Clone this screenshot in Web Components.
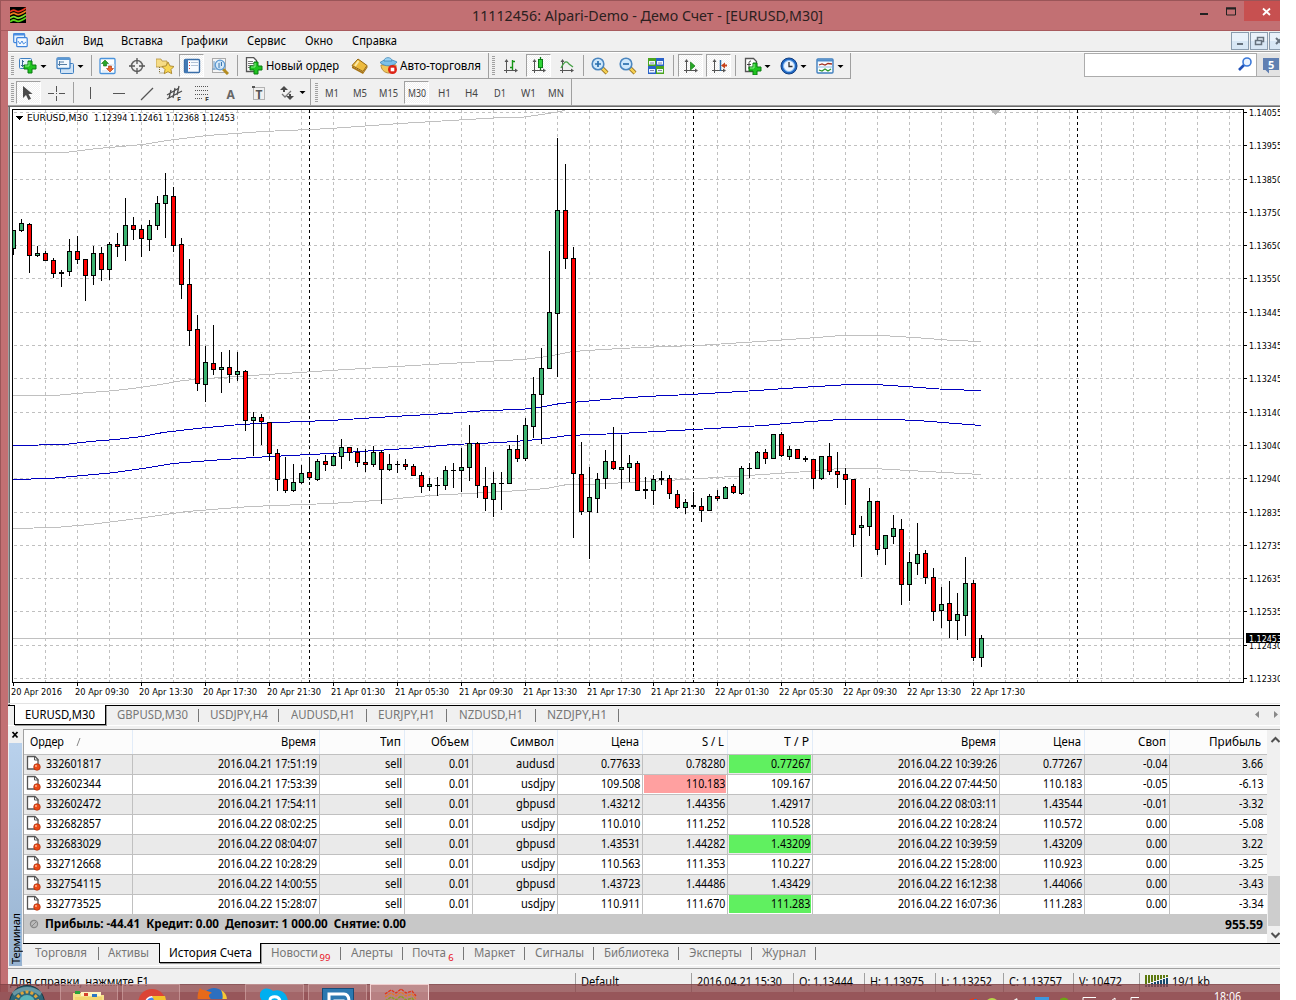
<!DOCTYPE html>
<html lang="ru">
<head>
<meta charset="utf-8">
<title>11112456: Alpari-Demo - Демо Счет - [EURUSD,M30]</title>
<style>
  body { margin: 0; width: 1296px; height: 1000px; overflow: hidden; background: #fff; font: 12px "Noto Sans", "Open Sans", sans-serif; color: #000; }
</style>
</head>
<body>
<mt-window></mt-window>

<script>
/* ---------- Icons, drawn on an 18x18 grid ---------- */
const plus = (x, y) => `<path d="M${x + 4} ${y}h4v4h4v4h-4v4h-4v-4h-4v-4h4z" fill="#1fc41f" stroke="#0a7a12" stroke-width="1"/><path d="M${x + 5} ${y + 1}v4h-4" fill="none" stroke="#8df08d"/>`;
const axes = `<path d="M4.500 3v13M2 13.500h13" stroke="#555" fill="none"/><path d="M2.500 5l2-3 2 3zM13 11.500l3 2-3 2z" fill="#555"/>`;
const lens = (sign) => `<path d="M11 11l5 5" stroke="#8a6414" stroke-width="4"/><path d="M11 11l5 5" stroke="#f3cf52" stroke-width="2.500"/><circle cx="7" cy="7" r="5.800" fill="#cfe8fb" stroke="#4b86bf" stroke-width="1.600"/>${sign}`;
const chartWin = (x, y) => `<rect x="${x + .5}" y="${y + .5}" width="12" height="10" rx="1" fill="#eaf4fd" stroke="#3f7fc0"/>`;

const ICONS = {
  newChart: `${chartWin(0, 1)}<path d="M3.500 3v7M2 8.500h8M3 4.500h2" stroke="#3b6a96" fill="none"/>${plus(5, 4)}`,
  profiles: `<rect x="4.500" y="6.500" width="13" height="10" rx="1" fill="#cfe3f6" stroke="#3f7fc0"/><rect x="1" y="1" width="13" height="10.500" rx="1" fill="#f2f8fe" stroke="#3f7fc0" stroke-width="1.300"/><path d="M1 2h13" stroke="#5b98d4" stroke-width="2"/><path d="M3.500 4v5M2 7.500h9M8 5l-4 0" stroke="#557da3" fill="none"/>`,
  market: `<rect x="1" y="1.500" width="15" height="15" rx="1" fill="#fdfeff" stroke="#4a93dc" stroke-width="1.300"/><path d="M7 8h9M3 14h6" stroke="#cfe0f1"/><path d="M6 3l3.500 3.500h-2V9h-3V6.500h-2z" fill="#29a629" stroke="#137013" stroke-width=".600"/><path d="M11 15l3.500-3.500h-2V9h-3v2.500h-2z" fill="#f2622a" stroke="#a5300a" stroke-width=".600"/>`,
  target: `<circle cx="9" cy="9" r="5.500" fill="none" stroke="#666" stroke-width="1.500"/><path d="M9 1v6M9 11v6M1 9h6M11 9h6" stroke="#555" stroke-width="1.300"/>`,
  folderStar: `<path d="M0 2h5l1 2h5v6H0z" fill="#f6dc86" stroke="#b5923c" stroke-width=".800"/><path d="M3.500 10v6h5" stroke="#7f6f38" stroke-dasharray="1 1" fill="none"/><path d="M12 5l1.900 3.900 4.100.6-3 3 .7 4.200L12 14.700l-3.700 2 .7-4.200-3-3 4.100-.6z" fill="#f8d652" stroke="#a8842c" stroke-width=".900"/>`,
  navigator: `<rect x="1.500" y="2.500" width="15" height="13" rx="1" fill="#f8fbff" stroke="#3a6ea8" stroke-width="1.400"/><path d="M3.500 2v14" stroke="#4279b5" stroke-width="3"/><path d="M6 5.500h1M6 8.500h1M6 11.500h1" stroke="#d84040"/><path d="M8 5.500h7M8 8.500h7" stroke="#9fb4cc" stroke-width=".800"/>`,
  tester: `<rect x="1.500" y="1.500" width="13" height="14" fill="#f5f5f5" stroke="#aaa"/><path d="M3 4v9M1 12h12M9 3v9" stroke="#6c9ac4"/><path d="M12 12l5 5" stroke="#b48c20" stroke-width="3"/><circle cx="9" cy="8" r="4.800" fill="#cde6fa" fill-opacity=".800" stroke="#5d9ad2" stroke-width="1.300"/><path d="M8 6v5M10.500 5v4" stroke="#3c78b0"/>`,
  order: `<path d="M1.500 .500h7l3 3v11h-10z" fill="#fff" stroke="#555" stroke-width="1.300"/><path d="M3 4.500h5M3 6.500h7M3 8.500h5M3 10.500h4" stroke="#777"/>${plus(5, 5)}`,
  book: `<path d="M7 2l9 6.500-4 6L1 8.500z" fill="#edbb3e" stroke="#94660e"/><path d="M1 9l11 6 4.500-6.500v2L12 17 1 11z" fill="#a87516"/><path d="M7.500 4L4 9" stroke="#fce9a6" stroke-width="2"/>`,
  auto: `<path d="M1 8c0 4 3 8 8 8s7-3 7-8z" fill="#efc75c" stroke="#b98e3a"/><path d="M0 5.500c3-2 5-3 8-3s6 1 9 2.500c-3 4.500-12 5.500-17 .5z" fill="#7cc0ea" stroke="#3d87b8" stroke-width=".800"/><path d="M4 4c0-4.500 8-4.500 8 0z" fill="#9bd3f4" stroke="#3d87b8" stroke-width=".800"/><circle cx="12.500" cy="12.500" r="4.500" fill="#dd2317"/><rect x="10.700" y="10.700" width="3.600" height="3.600" fill="#fff"/>`,
  bars: `${axes}<path d="M10.500 3v10M8 10.500h2M11 4.500h2" stroke="#159415" stroke-width="1.400"/>`,
  candles: `${axes}<path d="M10.500 0v13" stroke="#0c7d16" stroke-width="1.300"/><rect x="8.500" y="2.500" width="4" height="8" fill="#2ed336" stroke="#0c7d16"/>`,
  line: `${axes}<path d="M3 11c4-8 6-7 8-4l4 3" stroke="#46a046" fill="none" stroke-width="1.300"/>`,
  zoomIn: lens('<path d="M4 7h6M7 4v6" stroke="#2b6fae" stroke-width="1.700"/>'),
  zoomOut: lens('<path d="M4 7h6" stroke="#2b6fae" stroke-width="1.700"/>'),
  tiles: `<rect x="1" y="1" width="8" height="8" fill="#4aa51e"/><rect x="9" y="1" width="8" height="8" fill="#2a62c8"/><rect x="1" y="9" width="8" height="8" fill="#2a62c8"/><rect x="9" y="9" width="8" height="8" fill="#4aa51e"/><path d="M2 4h6v3.500H2zM10 4h6v3.500h-6zM2 12h6v3.500H2zM10 12h6v3.500h-6z" fill="#eef6ff"/><path d="M3 6h4M11 6h4M3 13.500h4M11 13.500h4" stroke="#88a"/>`,
  scroll: `${axes}<path d="M8.500 5l4.500 4-4.500 4z" fill="#25a925" stroke="#117a11" stroke-width=".700"/>`,
  shift: `${axes}<path d="M10.500 3v11" stroke="#2a6ca8" stroke-width="1.500"/><path d="M11 8.500l4-3v2h2v2h-2v2z" fill="#c6421a"/>`,
  indicator: `<path d="M1.500 1.500h8l3 3v10h-11z" fill="#fff" stroke="#555" stroke-width="1.300"/><path d="M7 4c-2 0-2 1-2 3v5M3 7.500h4" stroke="#444" fill="none"/>${plus(5, 6)}`,
  clock: `<circle cx="9" cy="9" r="8" fill="#1f67c3" stroke="#123f80"/><circle cx="9" cy="9" r="5.500" fill="#eef6ff" stroke="#8cc0f4"/><path d="M9 5v4.500h3.500" stroke="#333" fill="none" stroke-width="1.300"/>`,
  template: `<rect x="1" y="2" width="16" height="14" rx="1" fill="#f8fcff" stroke="#3f7ebd" stroke-width="1.400"/><path d="M1 3.500h16" stroke="#4e8ccb" stroke-width="2"/><path d="M3 8l3-1 3 1 3-1.500 4 .5" stroke="#a33020" fill="none" stroke-width="1.300"/><path d="M1 10h16" stroke="#7daede" stroke-width=".800"/><path d="M3 13l3 1 3-2 3 2 3-2" stroke="#2c952c" fill="none" stroke-width="1.300"/>`,
  cursor: `<path d="M3 3v12l3-3 2.500 5 2.500-1.200-2.500-4.800h4z" fill="#4a4a4a"/>`,
  cross: `<path d="M8.500 3v6M8.500 13v5M0 10.500h6M11 10.500h6M8 10.500h1" stroke="#555" fill="none"/>`,
  vline: `<path d="M8.500 4v12" stroke="#555"/>`,
  hline: `<path d="M3 10.500h12" stroke="#555"/>`,
  slash: `<path d="M3 17L15 5" stroke="#555" stroke-width="1.300"/>`,
  channel: `<path d="M1 12L13 5M1 16L16 8M5 7L3 15M9 5L7 15M13 3L11 12" stroke="#4e4e4e" stroke-width="1.300"/><text x="11" y="18.500" font-size="7" font-weight="bold" fill="#444">E</text>`,
  fibo: `<path d="M1 3.500h14M1 7.500h14M1 11.500h14M1 15.500h8" stroke="#555" stroke-dasharray="1 1"/><text x="11" y="18.500" font-size="7" font-weight="bold" fill="#444">F</text>`,
  letter: `<text x="4.500" y="15.500" font-size="12" font-weight="bold" fill="#666">A</text>`,
  label: `<rect x="3.500" y="4.500" width="11" height="12" fill="none" stroke="#777" stroke-dasharray="1 1"/><text x="5.500" y="15.500" font-size="12" font-weight="bold" fill="#555">T</text><path d="M2 3h3v2H2z" fill="#555"/>`,
  shapes: `<path d="M6 3l4 4h-3v2h-2V7H2z" fill="#4a4a4a"/><path d="M8 13h3v-2h2v2h3l-4 4z" fill="#4a4a4a"/><path d="M4 11l3 3 6-6" stroke="#777" fill="none" stroke-width="1.300"/>`,
  arrow: `<path d="M5.500 8h6l-3 3z" fill="#000"/>`
};
const icon = (name) => `<svg width="18" height="18" viewBox="0 0 18 18" font-family="Noto Sans, sans-serif">${ICONS[name]}</svg>`;

/* ---------- Text squeezed to a width: w in px, or k as a factor ---------- */
class FitText extends HTMLElement {
  constructor() {
    super();
    this.attachShadow({ mode: 'open' }).innerHTML = `
      <style>
        :host { display: inline-flex; flex: none; }
        span { display: inline-block; flex: none; white-space: pre; transform-origin: 0 50%; }
      </style>
      <span><slot></slot></span>`;
  }
  connectedCallback() {
    const span = this.shadowRoot.querySelector('span');
    const natural = span.getBoundingClientRect().width;
    const w = this.hasAttribute('k') ? natural * Number(this.getAttribute('k')) : Number(this.getAttribute('w'));
    if (!natural || !w) return;
    this.style.width = w + 'px';
    span.style.transform = `scaleX(${w / natural})`;
  }
}

/* ---------- Title bar ---------- */
class MtTitle extends HTMLElement {
  constructor() {
    super();
    this.attachShadow({ mode: 'open' }).innerHTML = `
      <style>
        :host { display: flex; box-sizing: border-box; height: 31px; background: #c27073; border-top: 1px solid #9a5558; border-bottom: 1px solid #a85b5e; border-left: 1px solid #9a5558; }
        .logo { margin: 6px 0 0 9px; }
        .name { margin: 4px 0 0 446px; font-size: 15px; line-height: 21px; color: #2b2020; }
        .close { width: 36px; height: 20px; background: #c75050; }
        .ctl { margin-left: auto; }
      </style>
      <svg class="logo" width="16" height="16"><rect width="16" height="16" fill="#000"/>
        <g fill="none" stroke-width="1.700"><path d="M0 5q3-3 6-1t10-3" stroke="#e8321a"/><path d="M0 8q3-3 6-1t10-3" stroke="#ee7a1c"/><path d="M0 11.500q3-3 6-1t10-3" stroke="#7ee02c"/><path d="M0 14.800q3-3 6-1t10-3" stroke="#5cd41a"/></g></svg>
      <span class="name"><fit-text w="351">11112456: Alpari-Demo - Демо Счет - [EURUSD,M30]</fit-text></span>
      <svg class="ctl" width="44" height="20"><path d="M0 13h8" stroke="#222" stroke-width="2"/><path d="M26.500 8v6h9V8M26 7h10" fill="none" stroke="#222"/><path d="M26 7.500h10" stroke="#222" stroke-width="2"/></svg>
      <div class="close"><svg width="36" height="20"><path d="M19 7.500l7 6.500M26 7.500L19 14" stroke="#fff" stroke-width="1.800"/></svg></div>`;
  }
}

/* ---------- Menu ---------- */
class MtMenu extends HTMLElement {
  constructor() {
    super();
    // [text, text width, space before it]
    const items = [['Файл', 28, 8], ['Вид', 20, 19], ['Вставка', 42, 18], ['Графики', 47, 18], ['Сервис', 39, 19], ['Окно', 28, 19], ['Справка', 45, 19]];
    const glyphs = ['<path d="M5 11h6" stroke="#66727e" stroke-width="2"/>',
      '<path d="M6.500 7V4.500h6v4H10M4.500 7.500h6v4h-6z" fill="none" stroke="#66727e" stroke-width="1.500"/>',
      '<path d="M6 5l6 6M12 5l-6 6" stroke="#66727e" stroke-width="2"/>'];
    this.attachShadow({ mode: 'open' }).innerHTML = `
      <style>
        :host { display: flex; box-sizing: border-box; height: 22px; background: #f0f0f0; border-bottom: 1px solid #fff; box-shadow: inset 0 -1px #a0a0a0; padding-left: 5px; overflow: hidden; }
        .ico { margin: 2px 0 0; }
        .item { line-height: 20px; }
        .mdi { display: flex; gap: 1px; margin: 1px -7px 0 auto; }
        .mdi div { box-sizing: border-box; width: 18px; height: 18px; background: linear-gradient(#e9f2fb 50%, #d8e7f5 50%); border: 1px solid #8a9cae; }
        .mdi svg { display: block; }
      </style>
      <svg class="ico" width="15" height="15"><rect x=".700" y=".700" width="11" height="9" rx="1" fill="#e5f1fd" stroke="#3f84dc" stroke-width="1.200"/><path d="M0 1.500h12" stroke="#4c8ee0" stroke-width="2"/><rect x="3.700" y="4.700" width="10.500" height="9" rx="1" fill="#f4f9ff" stroke="#3f84dc" stroke-width="1.200"/><path d="M5 8l2 3 2-3 1.500 3L13 9" fill="none" stroke="#4c8ee0"/></svg>
      ${items.map(([t, w, gap]) => `<span class="item" style="margin-left:${gap}px"><fit-text w="${w}">${t}</fit-text></span>`).join('')}
      <div class="mdi">${glyphs.map(g => `<div><svg width="16" height="16">${g}</svg></div>`).join('')}</div>`;
  }
}

/* ---------- One cell of a toolbar ---------- */
class ToolCell extends HTMLElement {
  connectedCallback() {
    const name = this.getAttribute('icon');
    this.attachShadow({ mode: 'open' }).innerHTML = `
      <style>
        :host { display: flex; flex: none; box-sizing: border-box; align-items: center; justify-content: center; width: ${this.getAttribute('w')}px; height: 100%; }
        svg { flex: none; display: block; }
        :host([pressed]) { height: 23px; background: repeating-conic-gradient(#fff 0 25%, #f1f1f1 0 50%) 0 0 / 2px 2px; border: 1px solid #fff; border-left-color: #a0a0a0; border-top-color: #a0a0a0; }
        :host([sep]) { height: 21px; background: #a0a0a0; }
        :host([grip]) i { width: 3px; height: 19px; background: repeating-linear-gradient(#a0a0a0 0 1px, transparent 1px 2px); }
      </style>${this.hasAttribute('grip') ? '<i></i>' : ''}${name ? icon(name) : ''}<slot></slot>`;
  }
}

const cells = (list) => list.map(([kind, w, pressed, tw]) => {
  if (kind === '-') return `<tool-cell w="${w}"></tool-cell>`;
  if (kind === '|') return `<tool-cell sep w="1"></tool-cell>`;
  if (kind === '#') return `<tool-cell grip w="${w}"></tool-cell>`;
  if (ICONS[kind]) return `<tool-cell icon="${kind}" w="${w}" ${pressed ? 'pressed' : ''}></tool-cell>`;
  return `<tool-cell w="${w}" ${pressed ? 'pressed' : ''}><fit-text w="${tw}">${kind}</fit-text></tool-cell>`;
}).join('');

class MtToolbars extends HTMLElement {
  constructor() {
    super();
    const standard = [['#', 8], ['newChart', 24], ['arrow', 8], ['-', 4], ['profiles', 25], ['arrow', 7], ['-', 7], ['|'], ['-', 6],
      ['market', 20], ['target', 37], ['folderStar', 19], ['-', 5], ['navigator', 25, 1], ['-', 3], ['tester', 25], ['-', 5], ['|'], ['-', 5],
      ['order', 22], ['-', 1], ['Новый ордер', 73, 0, 73], ['book', 42], ['auto', 16], ['-', 2], ['Авто-торговля', 82, 0, 81], ['-', 7]];
    const charts = [['#', 9], ['bars', 26], ['-', 2], ['candles', 25, 1], ['line', 32], ['|'], ['zoomIn', 31], ['zoomOut', 26], ['tiles', 30], ['-', 2], ['|'], ['-', 4],
      ['scroll', 25, 1], ['-', 3], ['shift', 25, 1], ['-', 4], ['|'], ['-', 5], ['indicator', 24], ['arrow', 6], ['-', 5], ['clock', 25], ['arrow', 6], ['-', 6], ['template', 24], ['arrow', 7], ['-', 6]];
    const drawing = [['#', 8], ['cursor', 25, 1], ['-', 3], ['cross', 25], ['-', 4], ['|'], ['vline', 33], ['hline', 24], ['slash', 32], ['channel', 24], ['fibo', 32], ['letter', 24], ['label', 32], ['shapes', 24], ['arrow', 8], ['-', 3]];
    const periods = [['#', 10], ['M1', 22, 0, 14], ['M5', 34, 0, 14], ['M15', 22, 0, 19], ['-', 5], ['M30', 25, 1, 18], ['-', 2],
      ['H1', 26, 0, 13], ['H4', 29, 0, 13], ['D1', 28, 0, 12], ['W1', 29, 0, 15], ['MN', 25, 0, 16], ['-', 3]];
    this.attachShadow({ mode: 'open' }).innerHTML = `
      <style>
        :host { display: block; background: #f0f0f0; height: 54px; }
        .row { display: flex; height: 26px; width: 1272px; }
        .bar { display: flex; align-items: center; box-sizing: border-box; height: 26px; border-right: 1px solid #a0a0a0; border-bottom: 1px solid #a0a0a0; flex: none; }
        .two { font-size: 10px; color: #444; }
        .two .bar { border-bottom: 0; }
        .two fit-text { margin-top: 2px; }
        .edge { height: 1px; background: #a0a0a0; border-bottom: 1px solid #696969; }
        .search { display: flex; box-sizing: border-box; width: 173px; height: 24px; margin-left: auto; background: #fff; border: 1px solid #acacac; justify-content: flex-end; }
        .chat { width: 23px; height: 24px; background: #e3e3e3; box-shadow: inset 0 -1px #acacac; overflow: hidden; }
      </style>
      <div class="row">
        <div class="bar">${cells(standard)}</div>
        <div class="bar">${cells(charts)}</div>
        <div class="search"><svg width="20" height="22"><path d="M3 16l6-6" stroke="#1f50b8" stroke-width="2.600"/><circle cx="11" cy="8" r="4" fill="#eaf3ff" stroke="#3a78d8" stroke-width="1.600"/></svg></div>
        <div class="chat"><svg width="24" height="24"><path d="M6 5h16v12h-10l0 3.500-3.500-3.500h-2.500z" fill="#5f7fb2"/><text x="11" y="15.500" font-size="11" font-weight="bold" fill="#fff" font-family="Noto Sans, sans-serif">5</text></svg></div>
      </div>
      <div class="row two">
        <div class="bar">${cells(drawing)}</div>
        <div class="bar">${cells(periods)}</div>
      </div>
      <div class="edge"></div>`;
  }
}

/* ---------- Chart ---------- */
// one candle per 8 px: colour (g, r or k for a doji), high, open/close top, bottom, low
const CANDLES = `g230,230,249,255 g219,223,231,232 r223,224,256,273 g246,253,256,257 r251,253,261,261 r258,260,274,278 k270,272,274,287 g239,251,272,276
r236,251,260,264 r259,259,276,301 g246,253,276,285 r247,253,270,281 g242,244,270,280 r233,244,247,257 g198,225,246,261 r217,225,230,240 r225,229,239,257
g220,225,240,251 g196,203,226,230 g173,195,204,238 r187,196,246,252 r238,244,285,299 r259,284,331,346 r315,329,384,391 g346,362,385,402 r325,363,370,375
g352,367,370,393 r350,367,375,383 g352,371,375,381 r370,371,421,431 g412,417,421,456 r414,417,422,445 r422,422,454,461 r449,453,480,491 r457,479,491,493
g464,482,491,492 g465,473,483,484 r457,472,478,480 g459,461,480,481 r455,461,465,471 g454,456,466,466 g439,447,457,469 r447,447,453,461 r448,452,463,467
r449,462,465,472 g446,452,465,467 r450,452,470,504 g454,464,470,471 k461,464,465,473 r459,464,467,470 r464,466,476,476 r472,475,487,493 g478,484,487,491
k477,485,486,496 g466,470,486,490 k463,470,471,488 g448,467,471,492 g425,443,468,481 r442,443,486,498 r467,486,499,511 g472,483,500,517 k472,483,484,510
g445,449,484,484 r435,449,459,462 g418,425,459,461 g377,394,427,438 g348,368,395,444 g251,312,369,369 g138,210,314,377 r164,210,259,269 r247,258,474,538
r442,474,512,515 g467,497,512,559 g473,479,499,513 g450,461,479,489 r427,461,469,470 g435,467,470,489 g455,463,468,482 r461,463,491,491 k477,489,491,499
g475,479,491,505 k471,478,480,485 r475,478,494,499 r490,494,508,509 g499,502,508,514 k492,505,507,509 r498,506,511,522 g494,496,511,511 r490,496,499,501
g486,487,499,499 r484,486,493,494 g466,468,494,495 k463,468,469,478 g451,452,469,469 r449,452,459,464 g434,434,459,459 r432,434,456,457 g446,449,457,460
r449,449,459,459 k456,458,460,462 r459,459,479,489 g456,456,479,480 r443,456,472,475 r452,471,475,488 r468,474,480,505 r479,479,535,547 g516,525,528,577
g488,501,527,536 r501,501,550,555 g535,535,549,565 g515,528,537,544 r519,529,585,605 g552,562,585,601 g523,554,564,575 r550,553,578,584 r568,577,612,621
g587,604,611,628 r581,603,621,638 g593,614,621,640 g557,583,616,636 r580,583,658,661 g635,638,658,667`.split(/\s+/);

const CURVES = [
  ['#c0c0c0', '13,152 65,152 97,148 121,146 143,144 167,140 207,135 263,131 310,129 330,128 400,123 450,120 503,117 520,117 542,114 560,111 567,109'],
  ['#c0c0c0', '13,395 55,395 77,393 115,390 133,388 160,384 183,380 220,377 267,374 300,372 330,370 430,364 503,360 523,359 547,356 573,351 603,349 640,347 697,345 760,341 817,337 841,335 882,335 914,337 954,340 981,341'],
  ['#0000c0', '13,445 65,444 90,441 115,439 143,436 163,432 197,428 240,424 280,422 300,421 330,420 393,416 447,413 487,410 520,409 540,407 560,403 583,401 617,398 645,396 690,394 757,390 800,387 833,385 849,384 875,384 906,386 946,389 981,390'],
  ['#0000c0', '13,479 50,478 83,475 115,472 143,468 173,463 210,460 253,457 290,455 330,453 407,448 453,444 500,442 527,440 547,438 567,435 620,433 657,431 713,428 763,425 797,422 840,419 893,419 917,420 943,422 981,425'],
  ['#c0c0c0', '13,528 55,527 90,524 130,519 187,511 250,506 330,503 377,500 430,495 487,492 520,490 547,488 567,484 587,484 650,481 700,478 763,474 807,471 840,468 873,468 927,471 981,474']
];
const PRICES = [['1.14055', 112], ['1.13955', 145], ['1.13850', 179], ['1.13750', 212], ['1.13650', 245], ['1.13550', 278], ['1.13445', 312], ['1.13345', 345], ['1.13245', 378],
  ['1.13140', 412], ['1.13040', 445], ['1.12940', 478], ['1.12835', 512], ['1.12735', 545], ['1.12635', 578], ['1.12535', 611], ['1.12430', 645], ['1.12330', 678]];
const TIMES = ['20 Apr 2016', '20 Apr 09:30', '20 Apr 13:30', '20 Apr 17:30', '20 Apr 21:30', '21 Apr 01:30', '21 Apr 05:30', '21 Apr 09:30', '21 Apr 13:30', '21 Apr 17:30',
  '21 Apr 21:30', '22 Apr 01:30', '22 Apr 05:30', '22 Apr 09:30', '22 Apr 13:30', '22 Apr 17:30'];

class MtChart extends HTMLElement {
  constructor() {
    super();
    this.attachShadow({ mode: 'open' });
  }
  connectedCallback() {
    const text = (x, y, len, str, fill = '#000') => `<text x="${x}" y="${y}" textLength="${len}" lengthAdjust="spacingAndGlyphs" fill="${fill}">${str}</text>`;
    let grid = '', bodies = '', labels = '';
    for (let x = 45; x < 1243; x += 32) grid += `M${x}.5 110V682`;
    PRICES.forEach(([p, y]) => {
      grid += `M14 ${y}.5H1243`;
      labels += `<path d="M1244 ${y}.5h3" stroke="#000"/>` + text(1249, y + 4, 33, p);
    });
    TIMES.forEach((t, i) => {
      labels += `<path d="M${13.5 + 64 * i} 683v3" stroke="#000"/>` + text(11 + 64 * i, 695, i ? 54 : 51, t);
    });
    CANDLES.forEach((c, i) => {
      const [hi, top, bot, lo] = c.slice(1).split(',').map(Number);
      const x = 13 + 8 * i;
      const fill = { g: '#3cb371', r: '#f00', k: '#000' }[c[0]];
      bodies += `<path d="M${x} ${hi}h1V${lo}h-1zM${x - 2} ${top}h5V${bot}h-5z"/>`;
      if (c[0] !== 'k') bodies += `<path d="M${x - 1} ${top + 1}h3V${bot - 1}h-3z" fill="${fill}"/>`;
    });
    this.shadowRoot.innerHTML = `
      <style>
        :host { display: block; height: 598px; background: #fff; overflow: hidden; }
        svg { display: block; }
        text { font: 9.5px "DejaVu Sans Condensed", "DejaVu Sans", sans-serif; }
      </style>
      <svg width="1272" height="598" viewBox="8 107 1272 598" shape-rendering="crispEdges">
        <path d="M8.500 107v598" stroke="#a0a0a0"/><path d="M9.500 107v598" stroke="#696969"/>
        <path d="${grid}" stroke="#c0c0c0" stroke-dasharray="3 3" fill="none"/>
        <path d="M309.500 110V682M693.500 110V682M1077.500 110V682" stroke="#000" stroke-dasharray="3 3"/>
        <path d="M990 110h10l-5 5z" fill="#b8b8b8"/>
        <path d="M13 638.500H1243" stroke="#c0c0c0"/>
        <clipPath id="area"><path d="M13 110H1243V682H13z"/></clipPath>
        <g clip-path="url(#area)">
          ${CURVES.map(([c, pts]) => `<polyline transform="translate(0 .5)" points="${pts}" fill="none" stroke="${c}"/>`).join('')}
          ${bodies}
        </g>
        <path d="M12.500 109.500H1243.500V682.500H12.500z" fill="none" stroke="#000"/>
        <path d="M15 116h8l-4 4z"/>
        ${labels}
        <path d="M1246 633h34v10h-34z"/>
        ${text(1249, 642, 33, '1.12453', '#fff')}
        ${text(27, 121, 61, 'EURUSD,M30')}${text(94, 121, 141, '1.12394 1.12461 1.12368 1.12453')}
        <path d="M8 703.500h1272" stroke="#e3e3e3"/>
      </svg>`;
  }
}

/* ---------- Row of tabs, used below the chart and below the terminal ---------- */
class MtTabs extends HTMLElement {
  connectedCallback() {
    const tabs = JSON.parse(this.getAttribute('tabs'));
    this.attachShadow({ mode: 'open' }).innerHTML = `
      <style>
        :host { display: flex; box-sizing: border-box; background: #f0f0f0; border-top: 1px solid #000; color: #777; }
        .tab { display: flex; flex: none; box-sizing: border-box; height: 18px; justify-content: center; align-items: center; position: relative; line-height: 18px; padding-right: 1px; }
        .tab::after { content: ""; position: absolute; right: 0; top: 3px; width: 1px; height: 13px; background: #777; }
        .tab.flat::after { display: none; }
        .tab.on { margin-top: -1px; height: 20px; background: #fff; color: #000; border: 1px solid #000; border-top: 0; box-shadow: 1px 1px #999; padding: 0; }
        .tab.on::after { display: none; }
        sub { font-size: 9.5px; color: #e81123; line-height: 1; margin: 9px 0 0 2px; vertical-align: 0; }
        .arrows { margin: 3px 0 0 auto; }
      </style>
      ${tabs.map(([t, w, tw, flag, n]) => `<div class="tab ${flag}" style="width:${w}px"><fit-text w="${tw}">${t}</fit-text>${n ? `<sub>${n}</sub>` : ''}</div>`).join('')}
      ${this.hasAttribute('arrows') ? '<svg class="arrows" width="26" height="12"><path d="M5 2v7L1 5.500zM20 2v7l4-3.500z" fill="#888"/></svg>' : ''}`;
  }
}

/* ---------- Account history ---------- */
const DEALS = [
  ['332601817', '2016.04.21 17:51:19', 'sell', '0.01', 'audusd', '0.77633', '0.78280', '0.77267+', '2016.04.22 10:39:26', '0.77267', '-0.04', '3.66'],
  ['332602344', '2016.04.21 17:53:39', 'sell', '0.01', 'usdjpy', '109.508', '110.183-', '109.167', '2016.04.22 07:44:50', '110.183', '-0.05', '-6.13'],
  ['332602472', '2016.04.21 17:54:11', 'sell', '0.01', 'gbpusd', '1.43212', '1.44356', '1.42917', '2016.04.22 08:03:11', '1.43544', '-0.01', '-3.32'],
  ['332682857', '2016.04.22 08:02:25', 'sell', '0.01', 'usdjpy', '110.010', '111.252', '110.528', '2016.04.22 10:28:24', '110.572', '0.00', '-5.08'],
  ['332683029', '2016.04.22 08:04:07', 'sell', '0.01', 'gbpusd', '1.43531', '1.44282', '1.43209+', '2016.04.22 10:39:59', '1.43209', '0.00', '3.22'],
  ['332712668', '2016.04.22 10:28:29', 'sell', '0.01', 'usdjpy', '110.563', '111.353', '110.227', '2016.04.22 15:28:00', '110.923', '0.00', '-3.25'],
  ['332754115', '2016.04.22 14:00:55', 'sell', '0.01', 'gbpusd', '1.43723', '1.44486', '1.43429', '2016.04.22 16:12:38', '1.44066', '0.00', '-3.43'],
  ['332773525', '2016.04.22 15:28:07', 'sell', '0.01', 'usdjpy', '110.911', '111.670', '111.283+', '2016.04.22 16:07:36', '111.283', '0.00', '-3.34']
];
const HEADS = [['Ордер', 34], ['Время', 35], ['Тип', 21], ['Объем', 38], ['Символ', 44], ['Цена', 28], ['S / L', 22], ['T / P', 25], ['Время', 35], ['Цена', 28], ['Своп', 28], ['Прибыль', 52]];

class MtHistory extends HTMLElement {
  constructor() {
    super();
    const page = `<svg width="15" height="16"><path d="M1.500 1.500h7.500l3 3v9.500h-10.500z" fill="#fff" stroke="#555" stroke-width="1.300"/><path d="M8.500 1v4h4" fill="none" stroke="#555"/><circle cx="11" cy="12" r="3.300" fill="#e84a18" stroke="#b02c08" stroke-width=".700"/><circle cx="10" cy="11" r="1" fill="#ffb08a"/></svg>`;
    const cell = (v) => {
      const mark = v.length > 5 && /[+-]$/.test(v) ? (v.endsWith('+') ? 'tp' : 'sl') : '';
      const str = mark ? v.slice(0, -1) : v;
      const k = /[a-z]/.test(str) ? .92 : .885;
      return `<div class="c"><span class="${mark}"><fit-text k="${k}">${str}</fit-text></span></div>`;
    };
    this.attachShadow({ mode: 'open' }).innerHTML = `
      <style>
        :host { display: flex; height: 213px; background: #fff; border-top: 1px solid #a0a0a0; border-left: 1px solid #a0a0a0; box-sizing: content-box; }
        .table { width: 1243px; flex: none; }
        .r { display: grid; grid-template-columns: 109px 187px 85px 68px 85px 85px 85px 85px 187px 85px 85px 97px; height: 20px; box-sizing: border-box; border-top: 1px solid #c0c0c0; }
        .r:nth-child(even) { background: #eaeaea; }
        .c { display: flex; justify-content: flex-end; box-sizing: border-box; border-right: 1px solid #c0c0c0; padding: 0 1px 0 0; line-height: 18px; }
        .c span { display: flex; justify-content: flex-end; width: 82px; margin: 0 0 1px; padding-right: 1px; box-sizing: border-box; }
        .c:nth-child(4) span { width: 60px; }
        .c:last-child { border-right: 0; padding-right: 3px; }
        .r .c:first-child { justify-content: flex-start; padding: 0 0 0 2px; gap: 5px; }
        .tp { background: #60f060; }
        .sl { background: #ffa0a0; }
        .head { height: 24px; background: #fcfcfc; border: 0; }
        .head .c { border-color: #e2ecf8; padding-right: 3px; line-height: 24px; }
        .head .c:last-child { padding-right: 6px; }
        .r.head .c:first-child { padding-left: 6px; gap: 12px; align-items: center; }
        .sum { display: flex; align-items: center; height: 20px; background: #c8c8c8; font-weight: bold; }
        .sum svg { margin: 0 6px 0 5px; }
        .sum fit-text { margin-top: -1px; }
        .sum .total { margin: 0 4px 0 auto; }
        .scroll { display: flex; flex-direction: column; width: 13px; background: #f0f0f0; align-items: flex-end; }
        .thumb { width: 12px; height: 50px; background: #cdcdcd; margin-top: auto; }
      </style>
      <div class="table">
        <div class="r head">${HEADS.map(([t, w], i) => `<div class="c"><fit-text w="${w}">${t}</fit-text>${i ? '' : '<svg width="8" height="10"><path d="M1 9l3-8" stroke="#888"/></svg>'}</div>`).join('')}</div>
        ${DEALS.map(d => `<div class="r">${d.map((v, i) => i ? cell(v) : `<div class="c">${page}<fit-text w="55">${v}</fit-text></div>`).join('')}</div>`).join('')}
        <div class="sum"><svg width="10" height="10"><circle cx="5" cy="5" r="3.600" fill="#bbb" stroke="#888" stroke-width="1.200"/><path d="M3 7l4-4" stroke="#888"/></svg>
          <fit-text w="361">Прибыль: -44.41  Кредит: 0.00  Депозит: 1 000.00  Снятие: 0.00</fit-text>
          <span class="total"><fit-text w="38">955.59</fit-text></span></div>
      </div>
      <div class="scroll">
        <svg width="12" height="20"><path d="M3.500 12l4-4 4 4" fill="none" stroke="#505050" stroke-width="2"/></svg>
        <div class="thumb"></div>
        <svg width="12" height="17"><path d="M3.500 7l4 4 4-4" fill="none" stroke="#505050" stroke-width="2"/></svg>
      </div>`;
  }
}

class MtTerminal extends HTMLElement {
  constructor() {
    super();
    const tabs = [['Торговля', 76, 52, ''], ['Активы', 60, 41, 'flat'], ['История Счета', 102, 83, 'on'], ['Новости', 80, 47, '', '99'], ['Алерты', 62, 42, ''], ['Почта', 61, 34, '', '6'],
      ['Маркет', 61, 41, ''], ['Сигналы', 69, 49, ''], ['Библиотека', 85, 65, ''], ['Эксперты', 73, 53, ''], ['Журнал', 64, 44, '']];
    this.attachShadow({ mode: 'open' }).innerHTML = `
      <style>
        :host { display: flex; height: 239px; background: #f0f0f0; }
        .side { display: flex; flex-direction: column; width: 15px; flex: none; }
        .side svg { display: block; margin: 2px 0 4px 3px; }
        .strip { flex: 1; width: 13px; margin: 0 0 2px 1px; background: linear-gradient(#b9d1ec, #98b3d0); display: flex; }
        .strip div { writing-mode: vertical-rl; transform: rotate(180deg); width: 13px; line-height: 13px; font-size: 11px; padding-top: 2px; letter-spacing: -.3px; }
        .main { flex: 1; min-width: 0; }
        mt-tabs { height: 23px; border-bottom: 1px solid #fff; }
      </style>
      <div class="side"><svg width="9" height="8"><path d="M1.500 1l5 5.500M6.500 1l-5 5.500" stroke="#000" stroke-width="1.800"/></svg><div class="strip"><div>Терминал</div></div></div>
      <div class="main"><mt-history></mt-history><mt-tabs tabs='${JSON.stringify(tabs)}'></mt-tabs></div>`;
  }
}

/* ---------- Status bar ---------- */
class MtStatus extends HTMLElement {
  constructor() {
    super();
    const parts = [['Default', 116, 38], ['2016.04.21 15:30', 102, 85], ['O: 1.13444', 71, 54], ['H: 1.13975', 71, 54], ['L: 1.13252', 68, 51], ['C: 1.13757', 70, 53], ['V: 10472', 66, 43]];
    let net = '';
    for (let i = 0; i < 8; i++) net += `<path d="M${i * 3} 0h2v${9 - i}h-2z" fill="#5d7a10"/><path d="M${i * 3} ${10 - i}h2V12h-2z" fill="#174a6c"/>`;
    this.attachShadow({ mode: 'open' }).innerHTML = `
      <style>
        :host { display: flex; height: 23px; background: #f0f0f0; border-top: 1px solid #a0a0a0; line-height: 26px; }
        .hint { width: 565px; padding-left: 2px; }
        .p { box-sizing: border-box; padding-left: 5px; flex: none; border-left: 1px solid #a0a0a0; margin-top: 4px; line-height: 18px; }
        .net { display: flex; gap: 3px; }
        .net svg { margin-top: 2px; }
      </style>
      <div class="hint"><fit-text w="139">Для справки, нажмите F1</fit-text></div>
      ${parts.map(([t, w, tw]) => `<div class="p" style="width:${w}px"><fit-text w="${tw}">${t}</fit-text></div>`).join('')}
      <div class="p net"><svg width="24" height="12">${net}</svg><fit-text w="38">19/1 kb</fit-text></div>`;
  }
}

/* ---------- Taskbar, a translucent strip over the bottom of the window ---------- */
class MtTaskbar extends HTMLElement {
  constructor() {
    super();
    const apps = [
      [60, 58, '<path d="M12 8h8l2 2h21v8H12z" fill="#f6e08a"/><path d="M14 6h5v3h-5z" fill="#2aa13a"/><path d="M20 7h20v4H20z" fill="#fff4c0"/><path d="M23 8h4v3h-4z" fill="#d8402c"/><path d="M31 9h5v3h-5z" fill="#2c77c4"/><path d="M14 12h27v4H14z" fill="#f3d670"/>', 'box'],
      [4, 58, '<circle cx="29" cy="18" r="14" fill="#dc4435"/><circle cx="29" cy="18" r="7" fill="#fff"/><circle cx="29" cy="18" r="5.500" fill="#4285f4"/><path d="M29 11h13l1 4H31z" fill="#f3c22c"/>', 'box'],
      [4, 58, '<circle cx="30" cy="16" r="12" fill="#2c6fc0"/><path d="M16 4c2 3 8 2 12 5-6 2-2 6 2 8H14c-1-5 0-9 2-13z" fill="#e66a1a"/><path d="M37 6c5 3 6 6 6 11h-5c1-4 1-7-1-11z" fill="#f7c833"/>', ''],
      [3, 59, '<path d="M14 12c-1-10 9-10 13-6 9-3 16 4 15 14H18z" fill="#00aff0"/><path d="M34 16c-1-6-10-5-10-1 0 2 1 3 3 4" fill="none" stroke="#fff" stroke-width="3"/>', 'box'],
      [4, 59, '<rect x="13.500" y="3.500" width="31" height="20" fill="#2b78b0" stroke="#154c7a"/><path d="M20 20V9h15q5 0 5 8M26 20v-4h8v4" fill="none" stroke="#fff" stroke-width="3"/>', 'box'],
      [3, 59, '<g fill="none" stroke-dasharray="3 1"><path d="M14 9l6-4 5 3 5-4 5 4 6-2 4 5" stroke="#e03418" stroke-width="1.300"/><path d="M14 12l6-4 5 3 5-4 5 4 6-2 4 5" stroke="#e87a20" stroke-width="1.200"/><path d="M14 16l6-4 5 3 5-4 5 4 6-2 4 5" stroke="#8aa020" stroke-width="1.500"/></g>', 'box on']
    ];
    this.attachShadow({ mode: 'open' }).innerHTML = `
      <style>
        :host { display: block; position: absolute; left: 0; top: 984px; width: 1280px; height: 16px; overflow: hidden; background: linear-gradient(rgba(142, 72, 75, .78) 8px, #97565a 8px); box-shadow: inset 0 1px rgba(110, 60, 62, .4); }
        .row { display: flex; height: 16px; }
        .orb { flex: none; width: 40px; margin: 1px -40px 0 7px; }
        .app { box-sizing: border-box; flex: none; height: 16px; }
        .app.box { border: 1px solid rgba(230, 190, 190, .45); border-bottom: 0; background: rgba(200, 150, 150, .25); }
        .app.on { background: rgba(225, 180, 180, .45); border-color: rgba(255, 225, 225, .8); }
        svg { display: block; }
        .tray { margin: 12px 0 0 auto; }
        .clock { margin: 4px 39px 0 61px; color: #fff; line-height: 18px; font-size: 12px; }
      </style>
      <div class="row">
        <svg class="orb" width="40" height="15"><circle cx="20" cy="18" r="17.500" fill="#2d6678" stroke="#183844"/><path d="M6 9q14-10 28 0" fill="none" stroke="#8fb9c2" stroke-width="4" opacity=".6"/><circle cx="20" cy="18" r="11" fill="none" stroke="#e0a63c" stroke-width="3" stroke-dasharray="3 2"/><circle cx="20" cy="18" r="8" fill="#5ab5b8"/></svg>
        ${apps.map(([gap, w, art, cls], i) => `<div class="app ${cls}" style="width:${w}px;margin-left:${i ? gap : gap - 7}px"><svg width="${w - 2}" height="15">${art}</svg></div>`).join('')}
        <svg class="tray" width="184" height="4"><g transform="translate(-4 1)"><path d="M0 3q5-4 10 0" fill="#d2402c" transform="translate(4 0)"/><path d="M9 2h3v2H9z" fill="#2c77c4"/><path d="M21 4q6-6 12 0" fill="#b7d84a"/><path d="M47 4l5-3 1 3z" fill="#eee"/><path d="M70 0h14v3H70z" fill="#3c97e0"/><path d="M95 2q4-3 8 0v2h-8z" fill="#6da414"/><path d="M118 3.500V.500h13M146 4l4-3v3M166 4V.500h8" fill="none" stroke="#fff"/></g></svg>
        <span class="clock"><fit-text w="27">18:06</fit-text></span>
      </div>`;
  }
}

class MtWindow extends HTMLElement {
  constructor() {
    super();
    const symbols = [['EURUSD,M30', 92, 70, 'on'], ['GBPUSD,M30', 93, 71, ''], ['USDJPY,H4', 80, 58, ''], ['AUDUSD,H1', 88, 64, ''], ['EURJPY,H1', 80, 57, ''], ['NZDUSD,H1', 89, 64, ''], ['NZDJPY,H1', 83, 60, '']];
    this.attachShadow({ mode: 'open' }).innerHTML = `
      <style>
        :host { display: block; position: relative; width: 1280px; height: 1000px; overflow: hidden; background: #c27073; }
        .client { padding-left: 7px; border-left: 1px solid #9a5558; }
        .symbols { height: 21px; padding-left: 6px; border-bottom: 1px solid #fff; }
        .gap { height: 3px; background: #f0f0f0; }
      </style>
      <mt-title></mt-title>
      <div class="client">
        <mt-menu></mt-menu>
        <mt-toolbars></mt-toolbars>
        <mt-chart></mt-chart>
        <mt-tabs class="symbols" arrows tabs='${JSON.stringify(symbols)}'></mt-tabs>
        <div class="gap"></div>
        <mt-terminal></mt-terminal>
        <mt-status></mt-status>
      </div>
      <mt-taskbar></mt-taskbar>`;
  }
}

customElements.define('fit-text', FitText);
customElements.define('mt-title', MtTitle);
customElements.define('mt-menu', MtMenu);
customElements.define('tool-cell', ToolCell);
customElements.define('mt-toolbars', MtToolbars);
customElements.define('mt-chart', MtChart);
customElements.define('mt-tabs', MtTabs);
customElements.define('mt-history', MtHistory);
customElements.define('mt-terminal', MtTerminal);
customElements.define('mt-status', MtStatus);
customElements.define('mt-taskbar', MtTaskbar);
customElements.define('mt-window', MtWindow);
</script>
</body>
</html>
